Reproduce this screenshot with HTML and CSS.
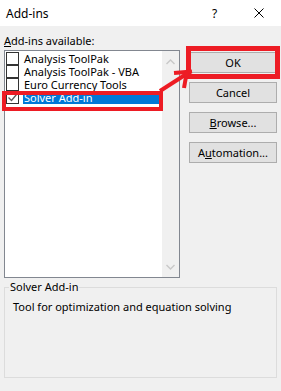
FILE: index.html
```html
<!DOCTYPE html>
<html>
<head>
<meta charset="utf-8">
<link rel="stylesheet" href="styles.css">
</head>
<body>
<div class="dialog">
  <div class="titlebar">
    <span class="title">Add-ins</span>
    <span class="help">?</span>
    <svg class="close" width="10" height="10" viewBox="0 0 10 10"><path d="M0.5 0.5 L9.5 9.5 M9.5 0.5 L0.5 9.5" stroke="#000" stroke-width="1" fill="none"/></svg>
  </div>
  <div class="body">
    <div class="main">
      <div class="left">
        <div class="label"><u>A</u>dd-ins available:</div>
        <div class="list">
          <div class="items">
            <div class="row"><span class="cb"></span><span class="txt">Analysis ToolPak</span></div>
            <div class="row"><span class="cb"></span><span class="txt">Analysis ToolPak - VBA</span></div>
            <div class="row"><span class="cb"></span><span class="txt">Euro Currency Tools</span></div>
            <div class="row sel"><span class="cb"><svg width="11" height="11" viewBox="0 0 11 11"><path d="M1.5 5.5 L4.5 8.5 L9.5 2.5" stroke="#5a5a5a" stroke-width="1.3" fill="none"/></svg></span><span class="txt">Solver Add-in</span></div>
          </div>
          <div class="scroll">
            <svg width="9" height="6" viewBox="0 0 9 6"><path d="M0.5 5 L4.5 1 L8.5 5" stroke="#c8c8c8" stroke-width="1.4" fill="none"/></svg>
            <svg width="9" height="6" viewBox="0 0 9 6"><path d="M0.5 1 L4.5 5 L8.5 1" stroke="#c8c8c8" stroke-width="1.4" fill="none"/></svg>
          </div>
        </div>
      </div>
      <div class="buttons">
        <div class="btn">OK</div>
        <div class="btn">Cancel</div>
        <div class="btn"><u>B</u>rowse...</div>
        <div class="btn">A<u>u</u>tomation...</div>
      </div>
    </div>
    <fieldset class="group">
      <legend>Solver Add-in</legend>
      <div class="desc">Tool for optimization and equation solving</div>
    </fieldset>
  </div>
  <div class="mark mark-row"></div>
  <div class="mark mark-ok"></div>
  <svg class="arrow" width="281" height="391" viewBox="0 0 281 391">
    <path d="M160 91 L188 73" stroke="#ed1c24" stroke-width="4" fill="none"/>
    <path d="M174 73 L192 71.5" stroke="#ed1c24" stroke-width="4" fill="none"/>
    <path d="M187 71 L184 88" stroke="#ed1c24" stroke-width="4" fill="none"/>
  </svg>
</div>
</body>
</html>
```
FILE: styles.css
```css
html, body {
  margin: 0;
  padding: 0;
}
body {
  width: 281px;
  height: 391px;
  background: #f0f0f0;
  font-family: "Noto Sans", "Open Sans", sans-serif;
  font-size: 11px;
  color: #000;
  overflow: hidden;
}
.dialog {
  position: relative;
  width: 281px;
  height: 391px;
}
.titlebar {
  height: 26px;
  background: #fff;
  display: flex;
  align-items: center;
  padding-left: 6px;
}
.title {
  font-size: 12px;
  flex: 1;
}
.help {
  width: 10px;
  margin-right: 32px;
  font-size: 12px;
}
.close {
  margin-right: 17px;
}
.body {
  padding: 0 4px;
}
.main {
  display: flex;
}
.left {
  width: 176px;
}
.label {
  margin-top: 8px;
  height: 14px;
  line-height: 14px;
  margin-bottom: 2px;
}
.label u, .btn u {
  text-decoration-thickness: 1px;
  text-underline-offset: 1px;
}
.list {
  height: 226px;
  border: 1px solid #828790;
  background: #fff;
  display: flex;
}
.items {
  flex: 1;
  padding-top: 1px;
}
.row {
  height: 13px;
  display: flex;
  align-items: center;
  padding-left: 1px;
}
.cb {
  width: 11px;
  height: 11px;
  border: 1px solid #333;
  background: #fff;
  display: flex;
}
.txt {
  margin-left: 4px;
  line-height: 13px;
  height: 13px;
  padding: 0 1px;
}
.sel .txt {
  background: #0078d7;
  color: #fff;
  flex: 1;
}
.scroll {
  width: 17px;
  background: #f0f0f0;
  display: flex;
  flex-direction: column;
  justify-content: space-between;
  align-items: center;
  padding: 8px 0 7px;
}
.buttons {
  margin-left: 9px;
  padding-top: 26px;
  display: flex;
  flex-direction: column;
  gap: 9px;
}
.btn {
  width: 86px;
  height: 19px;
  border: 1px solid #adadad;
  background: #e1e1e1;
  text-align: center;
  line-height: 19px;
}
.group {
  margin: 2px 0 0;
  padding: 6px 8px 0;
  height: 90px;
  border: 1px solid #dcdcdc;
}
.group legend {
  padding: 0 1px;
  margin-left: -4px;
  line-height: 14px;
}
.desc {
  line-height: 14px;
}
.mark {
  position: absolute;
  border: 4px solid #ed1c24;
  box-sizing: border-box;
}
.mark-row {
  left: 2px;
  top: 91px;
  width: 161px;
  height: 20px;
}
.mark-ok {
  left: 186px;
  top: 46px;
  width: 94px;
  height: 33px;
  border-width: 5px;
}
.arrow {
  position: absolute;
  left: 0;
  top: 0;
}
```
